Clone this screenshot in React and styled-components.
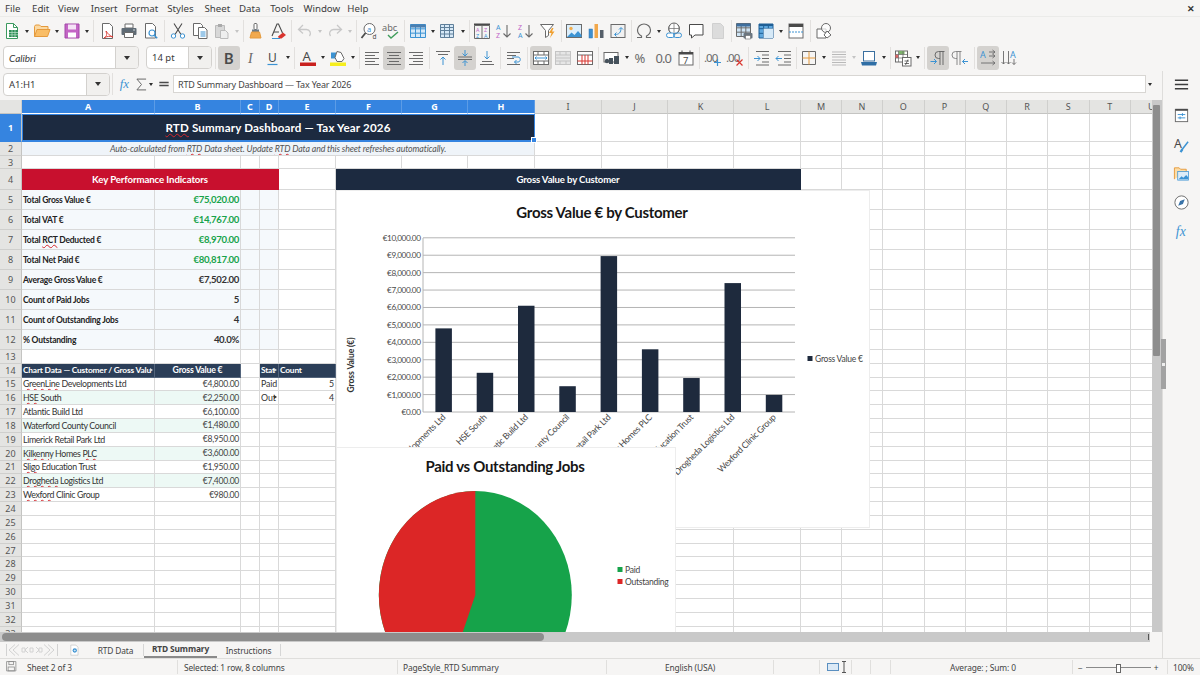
import React from "react";
import styled, { createGlobalStyle, css } from "styled-components";

const UI = `"Noto Sans", "Open Sans", sans-serif`;
const CELL = `Lato, "Liberation Sans", sans-serif`;
const BG = "#f6f5f4";
const GRID = "#d9d9d9";
const NAVY = "#1c2a40";
const HEAD = "#2b3e58";
const BLUE = "#3584e0";

const Global = createGlobalStyle`
  html, body { margin: 0; padding: 0; width: 1200px; height: 675px; overflow: hidden; background: ${BG}; }
  * { box-sizing: border-box; }
`;

const Win = styled.div`
  width: 1200px; height: 675px; display: flex; flex-direction: column; overflow: hidden;
  background: ${BG}; font-family: ${UI}; color: #3d3d3d;
`;
const MenuBar = styled.div`
  height: 17px; flex: none; display: flex; align-items: center; padding: 0 5px 0 5px; font-size: 9.7px;
  border-bottom: 1px solid #ebebe9;
`;
const MenuItem = styled.span` margin-right: ${p => p.$gap}px; `;
const Close = styled.span` margin-left: auto; font-size: 9px; font-weight: 700; color: #333; line-height: 1; `;
const Toolbar = styled.div`
  height: ${p => p.$h}px; flex: none; display: flex; align-items: center; padding-left: ${p => p.$pad || 0}px;
  padding-top: ${p => p.$top || 0}px;
`;
const ToolBtn = styled.div`
  width: ${p => p.$w || 22}px; height: 24px; flex: none; display: flex; align-items: center; justify-content: center;
  border-radius: 3px; background: ${p => (p.$on ? "#d4d2cf" : "transparent")};
  svg { display: block; overflow: visible; }
`;
const Sep = styled.div`
  width: ${p => p.$w}px; flex: none; height: 22px; display: flex; justify-content: center;
  &::before { content: ""; width: 1px; background: #e2e0de; }
`;
const Caret = styled.div`
  width: 8px; height: 24px; flex: none; display: flex; align-items: center; justify-content: center;
  &::before { content: ""; border: 2.5px solid transparent; border-top: 3px solid ${p => (p.$dim ? "#c4c4c4" : "#2e2e2e")}; border-bottom: 0; }
`;
const Combo = styled.div`
  width: ${p => p.$w}px; height: ${p => p.$h || 23}px; margin-left: ${p => p.$ml || 0}px; flex: none; display: flex;
  background: #fff; border: 1px solid #d3d1ce; border-radius: 4px; overflow: hidden;
`;
const ComboText = styled.div`
  flex: 1; display: flex; align-items: center; padding-left: 5px; font-size: ${p => (p.$it ? 10 : 9.5)}px; color: #3a3a3a;
  font-style: ${p => (p.$it ? "italic" : "normal")}; font-family: ${p => (p.$it ? CELL : UI)};
`;
const ComboArrow = styled.div`
  width: 23px; flex: none; background: #f1f0ee; border-left: 1px solid #d3d1ce; display: flex; align-items: center; justify-content: center;
  &::before { content: ""; border: 3.5px solid transparent; border-top: 4px solid #333; border-bottom: 0; }
`;
const Body = styled.div` flex: 1; display: flex; min-height: 0; `;
const Left = styled.div` width: 1162px; flex: none; display: flex; flex-direction: column; `;
const FormulaBar = styled.div` height: 29px; flex: none; display: flex; align-items: center; padding-bottom: 3px; `;
const Input = styled.div`
  width: 973px; height: 18px; flex: none; background: #fff; border: 1px solid #d8d6d3; padding-left: 4px;
  display: flex; align-items: center; font-size: 9px; letter-spacing: -.2px; color: #444; white-space: nowrap;
`;
const SheetRow = styled.div` height: 532px; flex: none; display: flex; `;
const Sheet = styled.div`
  width: 1152px; height: 532px; flex: none; position: relative; overflow: hidden; background: #fff;
`;
const Grid = styled.div`
  display: grid; grid-template-columns: ${p => p.$cols}; grid-template-rows: ${p => p.$rows};
  font-family: ${CELL};
`;
const ColHead = styled.div`
  display: flex; align-items: center; justify-content: center; font-size: 9px; overflow: hidden;
  background: ${p => (p.$sel ? BLUE : "#e4e4e2")}; color: ${p => (p.$sel ? "#fff" : "#555")};
  font-weight: ${p => (p.$sel ? 700 : 400)}; border-right: 1px solid ${p => (p.$sel ? "#5c9ce6" : "#cfcfcd")};
  border-bottom: 1px solid ${p => (p.$sel ? "#fff" : "#c4c4c2")};
  font-family: ${UI};
`;
const RowHead = styled(ColHead)`
  font-size: 9px; border-right: 1px solid #c4c4c2; border-bottom: 1px solid ${p => (p.$sel ? BLUE : "#cfcfcd")};
`;
const kinds = {
  blank: css``,
  title: css`background: ${NAVY}; color: #fff; font-weight: 700; font-size: 11.6px; justify-content: center; letter-spacing: .15px; border-color: ${NAVY};`,
  note: css`background: #eff4f9; color: #555; font-style: italic; font-size: 8.8px; justify-content: center; letter-spacing: -.13px;`,
  kpihead: css`background: #c8102e; color: #fff; font-weight: 700; font-size: 9.7px; justify-content: center; letter-spacing: -.12px; border-color: #c8102e;`,
  bandhead: css`background: ${NAVY}; color: #fff; font-weight: 700; font-size: 9.6px; justify-content: center; letter-spacing: -.15px; border-color: ${NAVY};`,
  label: css`background: #f5f9fc; color: #222; font-weight: 700; font-size: 8.5px; padding-left: 1px; letter-spacing: -.22px;`,
  tint: css`background: #f5f9fc;`,
  good: css`background: #f5f9fc; color: #16a34a; font-weight: 700; font-size: 9.6px; justify-content: flex-end; padding-right: 1px; letter-spacing: -.35px;`,
  num: css`background: #f5f9fc; color: #333; font-weight: 700; font-size: 9.6px; justify-content: flex-end; padding-right: 1px; letter-spacing: -.35px;`,
  head: css`background: ${HEAD}; color: #fff; font-weight: 700; font-size: 8.4px; padding-left: 1px; letter-spacing: -.2px; border-color: #53647b;`,
  headc: css`background: ${HEAD}; color: #fff; font-weight: 700; font-size: 8.7px; justify-content: center; align-items: flex-start; letter-spacing: -.2px; border-color: #53647b;`,
  name: css`background: ${p => (p.$alt ? "#edf9f5" : "#fff")}; color: #333; font-size: 8.8px; line-height: 10px; padding: 0 0 1px 1px; align-items: flex-end; letter-spacing: -.35px;`,
  amount: css`background: ${p => (p.$alt ? "#edf9f5" : "#fff")}; color: #444; font-size: 8.6px; justify-content: flex-end; padding-right: 1px; letter-spacing: -.3px;`,
  small: css`color: #333; font-size: 8.8px; padding-left: 1px; letter-spacing: -.1px;`,
  smallr: css`color: #333; font-size: 8.8px; justify-content: flex-end; padding-right: 1px;`,
};
const Cell = styled.div`
  grid-column: span ${p => p.$span || 1}; display: flex; align-items: center; overflow: hidden; white-space: nowrap;
  position: relative; border-right: 1px solid ${GRID}; border-bottom: 1px solid ${GRID};
  ${p => kinds[p.$kind || "blank"]}
`;
const Clip = styled.span`
  position: absolute; right: 1px; top: 4px; border: 2.5px solid transparent; border-left: 3px solid ${p => p.$c || "#ddd"}; border-right: 0;
`;
const Typo = styled.span`
  text-decoration: underline wavy #d6262c; text-decoration-thickness: 1px; text-underline-offset: .5px;
`;
const Selection = styled.div`
  position: absolute; left: 22px; top: 14px; width: 513px; height: 28px; border: 1px solid ${BLUE}; border-bottom-width: 2px; pointer-events: none;
  &::after { content: ""; position: absolute; right: -3px; bottom: -3px; width: 4px; height: 4px; background: ${BLUE}; border: 1px solid #fff; }
`;
const ChartCard = styled.div`
  position: absolute; left: ${p => p.$x}px; top: ${p => p.$y}px; width: ${p => p.$w}px; height: ${p => p.$h}px; background: #fff;
  outline: 1px solid #ededed; outline-offset: -1px; svg { display: block; overflow: hidden; }
`;
const ChartTitle = styled.text`
  font-family: ${CELL}; font-weight: 700; font-size: 15px; fill: #161616; text-anchor: middle; letter-spacing: -.3px;
`;
const AxisLabel = styled.text`
  font-family: ${CELL}; font-size: 8.8px; fill: #4a4a4a; text-anchor: end; letter-spacing: -.28px;
`;
const TickLabel = styled(AxisLabel)` font-size: 8.2px; letter-spacing: -.4px; `;
const LegendLabel = styled.text`
  font-family: ${CELL}; font-size: 8.5px; fill: #444; letter-spacing: -.25px;
`;
const AxisTitle = styled.text`
  font-family: ${CELL}; font-weight: 700; font-size: 8.6px; fill: #333; text-anchor: middle; letter-spacing: -.1px;
`;
const VScroll = styled.div` width: 10px; flex: none; background: #c9c9c9; padding: 5px 1px 0; `;
const VThumb = styled.div` width: 7px; height: 251px; background: #8d8d8d; border-radius: 1px; `;
const HScroll = styled.div`
  height: 10px; width: 1150px; flex: none; background: #c9c9c9; display: flex; align-items: center; padding-left: 2px; position: relative;
  &::after { content: ""; position: absolute; right: 1px; top: 2px; width: 1px; height: 6px; background: #555; }
`;
const HThumb = styled.div` width: 542px; height: 8px; background: #8d8d8d; border-radius: 4px; `;
const TabBar = styled.div` height: 16px; flex: none; display: flex; align-items: stretch; font-size: 8.4px; letter-spacing: -.12px; `;
const NavBox = styled.div` width: 62px; flex: none; display: flex; align-items: center; padding-left: 5px; `;
const AddTab = styled.div` width: 26px; flex: none; display: flex; align-items: center; padding-left: 7px; `;
const Tab = styled.div`
  width: ${p => p.$w}px; flex: none; display: flex; align-items: center; justify-content: center; color: #444; padding-bottom: 1px;
  font-weight: ${p => (p.$on ? 700 : 400)}; border-bottom: 2px solid ${p => (p.$on ? "#8a8a8a" : "transparent")};
  border-right: ${p => (p.$sep ? "1px solid #d6d6d6" : "none")};
  ${p => p.$sep && "height: 12px; align-self: center; padding-bottom: 0; border-bottom: none;"}
`;
const Side = styled.div`
  width: 38px; flex: none; border-left: 1px solid #dedddb; display: flex; flex-direction: column; align-items: center; position: relative;
`;
const SideBtn = styled.div`
  height: ${p => p.$h || 29}px; width: 100%; flex: none; display: flex; align-items: center; justify-content: center;
  margin-bottom: ${p => p.$mb || 0}px; svg { overflow: visible; }
`;
const Grip = styled.div`
  position: absolute; left: -2px; top: 268px; width: 5px; height: 50px; background: #a2a2a2;
  &::after { content: ""; position: absolute; left: 1px; top: 24px; width: 3px; height: 3px; background: #eee; }
`;
const Status = styled.div`
  height: 17px; flex: none; display: flex; border-top: 1px solid #dfdedc; font-size: 8.4px; letter-spacing: -.12px; color: #444;
`;
const StatusCell = styled.div`
  width: ${p => p.$w}px; flex: none; display: flex; align-items: center; justify-content: ${p => p.$j || "flex-start"};
  padding-left: ${p => p.$pl || 0}px; gap: ${p => p.$gap || 0}px;
  border-left: ${p => (p.$first ? "none" : "1px solid #e0dfdd")}; margin: 1px 0; white-space: nowrap;
`;
const Slider = styled.div`
  width: 65px; height: 1px; background: #8a8a8a; position: relative;
  &::after { content: ""; position: absolute; left: 30px; top: -3px; width: 3px; height: 7px; background: #fff; border: 1px solid #666; }
`;

const G = "#6a6a6a", D = "#4a4a4a", B = "#3c93d3", O = "#e59a3c", R = "#d9352f", L = "#c8c8c8";
const ln = { fill: "none", stroke: G, strokeWidth: 1 };
const bl = { fill: "none", stroke: B, strokeWidth: 1 };

const grid = (c, x = 1.5, y = 2.5, w = 15, h = 13) => (
  <path d={`M${x} ${y}h${w}v${h}h-${w}zM${x} ${y + h / 3}h${w}M${x} ${y + 2 * h / 3}h${w}M${x + w / 3} ${y}v${h}M${x + 2 * w / 3} ${y}v${h}`} fill="none" stroke={c} />
);

const icons = {
  new: <><path d="M3.5 1.5h7l4 4v11h-11z" fill="#fff" stroke="#3c9a5f" /><path d="M10.5 1.5v4h4" fill="none" stroke="#3c9a5f" /><rect x="6" y="8" width="9" height="7" fill="#2f8f57" /><path d="M6 10.5h9M6 12.8h9M9 8v7M12 8v7" stroke="#bfe3cd" strokeWidth=".7" /></>,
  open: <><path d="M1.5 14.5v-10l1-1.5h4l1.5 1.5h7v3" fill="#fbd9a2" stroke={O} /><path d="M1.5 14.5l2.5-7h13l-2.5 7z" fill="#f9bd66" stroke={O} /></>,
  save: <><path d="M2 2h14v14H2z" fill="#c365c5" stroke="#a348a8" /><rect x="5" y="2.5" width="8" height="5" fill="#f5e3f6" /><rect x="5" y="10.5" width="8" height="5" fill="#fff" /></>,
  pdf: <><path d="M4.5 1.5h7l3 3v12h-10z" fill="#fff" stroke={G} /><path d="M8 9c1 4 1 5-2 7 3-2 6-2 9-1-3-1-5-3-7-6z" fill="none" stroke={R} strokeWidth=".9" /></>,
  print: <><path d="M5 2h8v4H5z" fill="#fff" stroke={G} /><rect x="1.5" y="6" width="15" height="7" rx="1" fill="#5f6b75" /><path d="M4.5 10.5h9v5h-9z" fill="#fff" stroke={G} /><circle cx="14" cy="8" r=".7" fill="#fff" /></>,
  preview: <><path d="M3.5 1.5h7l3 3v11.5h-10z" fill="#fff" stroke={G} /><circle cx="10" cy="11" r="3" fill="#fff" stroke={B} strokeWidth="1.2" /><path d="M12.2 13.2l3 3" stroke={B} strokeWidth="1.5" /></>,
  cut: <><path d="M5 1.5l7 11M13 1.5l-7 11" stroke={D} strokeWidth="1.1" /><circle cx="4.5" cy="14" r="2.2" fill="#fff" stroke={B} /><circle cx="13.5" cy="14" r="2.2" fill="#fff" stroke={B} /></>,
  copy: <><path d="M2.5 1.5h7l2 2v10h-9z" fill="#fff" stroke={G} /><path d="M7.5 5.5h6l2.5 2.5v8.5h-8.5z" fill="#fff" stroke={G} /><path d="M9.5 10h5M9.5 12h5M9.5 14h5" stroke={B} /></>,
  paste: <><path d="M2.5 3.5h9v12h-9z" fill="#d8d8d8" stroke="#bbb" /><rect x="5" y="2" width="4" height="3" fill="#aaa" /><path d="M7.5 8.5h5l2.5 2.5v5.5h-7.5z" fill="#eee" stroke="#bbb" /></>,
  clone: <><rect x="7" y="1.5" width="3" height="6" rx="1" fill="#fff" stroke={G} /><path d="M5 7.5h7v2.5H5z" fill="#6c7a86" /><path d="M4.5 10h8l1.5 6H3z" fill="#f1a94e" stroke={O} /></>,
  clear: <><path d="M3 14L8 2h1.5l4 9" fill="none" stroke={D} strokeWidth="1.1" /><path d="M5 10h5" stroke={D} /><path d="M9 14.5l5-4 3 2.5-4.5 3.5H10z" fill={R} /><path d="M3 16.5h8" stroke={B} /></>,
  undo: <path d="M7 3L2.5 7.5 7 11.5M2.5 7.5h8a4 4 0 0 1 3 6.5" fill="none" stroke={L} strokeWidth="1.3" />,
  redo: <path d="M11 3l4.5 4.5L11 11.5M15.5 7.5h-8a4 4 0 0 0-3 6.5" fill="none" stroke={L} strokeWidth="1.3" />,
  find: <><circle cx="9.5" cy="7" r="5.5" fill="#fff" stroke={G} /><path d="M5.5 11l-4 5" stroke={D} strokeWidth="1.8" /><text x="7" y="9.5" fontSize="7.5" fill={B} fontFamily={UI}>a</text><text x="12.5" y="17" fontSize="6.5" fill={D} fontFamily={UI}>d</text></>,
  spell: <><text x="0" y="9" fontSize="9.2" fill={G} fontFamily={UI}>abc</text><path d="M6 13l3 3 7-6" fill="none" stroke="#3f9d5b" strokeWidth="1.4" /></>,
  table: <><rect x="1.5" y="2.5" width="15" height="13" fill="#d7e9f7" />{grid(B)}<rect x="1.5" y="2.5" width="15" height="3" fill="#4b7fb0" /></>,
  rows: <><rect x="1.5" y="2.5" width="13" height="13" fill="#d7e9f7" /><path d="M1.5 2.5h13v13h-13zM1.5 5.5h13M1.5 8.5h13M1.5 12h13M5.5 2.5v13M10.5 2.5v13" fill="none" stroke="#5f7f9a" /></>,
  sort: <><rect x="1" y="1.5" width="16" height="2" fill={D} /><path d="M1.5 3.5h15v13h-15zM9 3.5v13" fill="#f4f4f4" stroke={G} /><text x="3" y="9.5" fontSize="5.4" fill="#c065c8" fontFamily={UI}>A</text><text x="3" y="15.5" fontSize="5.4" fill={B} fontFamily={UI}>Z</text><text x="11" y="9.5" fontSize="5.4" fill="#c065c8" fontFamily={UI}>Z</text><text x="11" y="15.5" fontSize="5.4" fill={B} fontFamily={UI}>A</text></>,
  asc: <><text x="1" y="7.5" fontSize="7" fill={B} fontFamily={UI}>A</text><text x="1" y="16" fontSize="7" fill="#c065c8" fontFamily={UI}>Z</text><path d="M12 3v12M8.5 11.5l3.5 3.5 3.5-3.500" fill="none" stroke={G} strokeWidth="1.1" /></>,
  desc: <><text x="1" y="7.5" fontSize="7" fill="#c065c8" fontFamily={UI}>Z</text><text x="1" y="16" fontSize="7" fill={B} fontFamily={UI}>A</text><path d="M12 3v12M8.5 11.5l3.5 3.5 3.5-3.500" fill="none" stroke={G} strokeWidth="1.1" /></>,
  filter: <><path d="M1.5 2.5h13l-5 6v5l-3 2v-7z" fill="#fff" stroke={G} /><path d="M13 6l-3 5h2.5l-1.5 5 4.5-6.5h-2.5l1.5-3.5z" fill="#f0a030" /></>,
  image: <><rect x="1.5" y="2.5" width="15" height="13" fill="#dceefb" stroke={G} /><circle cx="6" cy="6.5" r="1.7" fill="#f1ad4e" /><path d="M2 15l4.500-4.500 3 2.500 3.500-4 3.500 4v2z" fill={B} /></>,
  chart: <><rect x="2" y="7" width="3.5" height="9" fill="#3f8fcf" stroke="#2c76b0" strokeWidth=".5" /><rect x="7.5" y="2" width="3.5" height="14" fill="#f2a84b" /><rect x="13" y="8" width="3.5" height="8" fill="#555f69" /></>,
  pivot: <><rect x="2" y="2.5" width="14" height="13" fill="#f1f1f1" stroke={G} /><path d="M6 12.5c4 0 6-2 6-6.5M10 7.5l2-2 2 2M7.5 10.5l-2 2 2 2" fill="none" stroke={B} /></>,
  omega: <path d="M2 15.5h4.500v-1.500C3.500 12.500 2.500 10 2.500 8c0-3.500 3-6 6.500-6s6.500 2.500 6.500 6c0 2-1 4.500-4 6v1.500H16" fill="none" stroke={G} strokeWidth="1.2" />,
  link: <><circle cx="9" cy="6.500" r="5.500" fill="#fff" stroke={G} /><path d="M3.500 6.500h11M9 1v11M5.500 2.500c-2 3-2 5 0 8M12.500 2.500c2 3 2 5 0 8" fill="none" stroke={G} strokeWidth=".7" /><rect x="1.500" y="11" width="8" height="4.500" rx="2.200" fill="#fff" stroke={B} /><rect x="8.500" y="11" width="8" height="4.500" rx="2.200" fill="none" stroke={B} /></>,
  comment: <path d="M2.500 2.500h13.500v10.500H8l-3.500 3v-3h-2z" fill="#fff" stroke={D} />,
  hf: <path d="M3.500 1.500h8l3 3v12h-11z" fill="#dcdcdc" stroke="#d0d0d0" />,
  printarea: <><rect x="1.500" y="1.500" width="14" height="13" fill="#cfe4f4" />{grid(G, 1.500, 1.500, 14, 13)}<rect x="1.500" y="1.500" width="14" height="3" fill="#3f6f9e" /><rect x="8.500" y="11" width="9" height="5.500" rx="1" fill="#6b7680" /><rect x="10.500" y="13.500" width="5" height="3.500" fill="#fff" stroke={G} strokeWidth=".6" /></>,
  freeze: <><rect x="2" y="2" width="14" height="14" fill="#5da6dd" />{grid("#1f5f96", 2, 2, 14, 14)}<rect x="2" y="2" width="14" height="2" fill="#1f5f96" /><rect x="6.600" y="6.600" width="9.400" height="9.400" fill="#d6e9f7" /></>,
  split: <><rect x="2" y="2" width="14" height="14" fill="#fff" stroke={G} /><rect x="2" y="2" width="14" height="3" fill={D} /><path d="M2 10h14" stroke={B} strokeDasharray="2 1" /></>,
  shapes: <><path d="M2 7h9v9H2z" fill="#fff" stroke={G} /><circle cx="11" cy="6" r="4.500" fill="#fff" fillOpacity=".7" stroke={G} /><path d="M12 9l4 4-4 3-3-3z" fill="#fff" stroke={G} /></>,
  bold: <text x="4" y="14.500" fontSize="14.500" fontWeight="700" fill={D} fontFamily={CELL}>B</text>,
  italic: <text x="6" y="14" fontSize="14" fontStyle="italic" fill={G} fontFamily="Liberation Serif">I</text>,
  under: <><text x="4" y="12.500" fontSize="12" fill={D} fontFamily={UI}>U</text><path d="M3.500 15.500h10" stroke={B} strokeWidth="1.200" /></>,
  fontcolor: <><text x="3.500" y="12" fontSize="13" fill={D} fontFamily={UI}>A</text><rect x="1" y="13.500" width="16" height="3.500" fill="#c9211e" /></>,
  fontbg: <><path d="M2 3.500h5v6H2z" fill={B} /><path d="M8 2.500l4 1 3 6-2 3H8l-2-4z" fill="#fff" stroke={G} /><rect x="1" y="13.500" width="16" height="3.500" fill="#f6ee1d" /></>,
  aleft: <path d="M2 3.500h14M2 6.500h10M2 9.500h14M2 12.500h10M2 15.500h14" {...ln} />,
  acenter: <path d="M2 3.500h14M4 6.500h10M2 9.500h14M4 12.500h10M2 15.500h14" {...ln} />,
  aright: <path d="M2 3.500h14M6 6.500h10M2 9.500h14M6 12.500h10M2 15.500h14" {...ln} />,
  vtop: <><path d="M2 2.500h14M4 5.500h10" {...ln} /><path d="M9 16V8M6.500 10.500L9 8l2.500 2.500" {...bl} /></>,
  vmid: <><path d="M2 8h14M2 10.500h14" {...ln} /><path d="M9 1v5.500M6.500 4.500L9 7l2.500-2.500M9 17v-5M6.500 14L9 11.500 11.500 14" {...bl} /></>,
  vbot: <><path d="M4 12.500h10M2 15.500h14" {...ln} /><path d="M9 2v8M6.500 7.500L9 10l2.500-2.500" {...bl} /></>,
  wrap: <><path d="M2 3.500h13M2 6.500h9M2 9.500h7M2 15.500h13" {...ln} /><path d="M7 8h6c3 0 3 5 0 5H9.500M11.500 11l-2 2 2 2" {...bl} /></>,
  merge: <><rect x="1.500" y="2.500" width="15" height="13" fill="#fff" stroke={G} /><path d="M1.500 6h15M1.500 12h15M6 2.500V6M12 2.500V6M6 12v3.500M12 12v3.500" {...ln} /><path d="M3 9h12M4.500 7.500L3 9l1.500 1.500M13.500 7.500L15 9l-1.500 1.500" {...bl} /></>,
  unmerge: <><rect x="1.500" y="2.500" width="15" height="13" fill="#e6e6e6" stroke="#c4c4c4" /><path d="M1.500 6h15M1.500 9h15M1.500 12h15M6 2.500V6M12 2.500V6M6 12v3.500M12 12v3.500" fill="none" stroke="#c4c4c4" /></>,
  split2: <><rect x="1.500" y="2.500" width="15" height="13" fill="#fff" stroke={G} /><path d="M1.500 6h15" {...ln} /><path d="M6 6v9.500M9 6v9.500M12 6v9.500M1.500 12h15" fill="none" stroke={R} /></>,
  currency: <><rect x="1" y="3.500" width="14" height="9.500" fill="#fff" stroke={G} /><rect x="6" y="9" width="4" height="6" fill="#46525c" /><rect x="11" y="7" width="5" height="8" fill="#46525c" /><circle cx="4" cy="12" r="2.200" fill="#46525c" /></>,
  percent: <text x="1.500" y="14" fontSize="13" fill={G} fontFamily={UI}>%</text>,
  zero: <text x="0.500" y="14" fontSize="13" fill={G} fontFamily={UI} letterSpacing="-1">0.0</text>,
  date: <><rect x="2" y="3.500" width="14" height="12.500" fill="#fff" stroke={G} /><rect x="2" y="3" width="14" height="2.500" fill={D} /><path d="M5 1.500v3M13 1.500v3" stroke={D} /><text x="6" y="14.500" fontSize="9.500" fill={D} fontFamily={UI}>7</text></>,
  adddec: <><text x="0" y="13" fontSize="11.500" fill={G} fontFamily={UI} letterSpacing="-1">.00</text><path d="M13.500 10v7M10 13.500h7" stroke={B} strokeWidth="1.200" /></>,
  deldec: <><text x="0" y="13" fontSize="11.500" fill={G} fontFamily={UI} letterSpacing="-1">.00</text><path d="M10.500 10.500l6 6M16.500 10.500l-6 6" stroke={R} strokeWidth="1.200" /></>,
  indent: <><path d="M3 2.500h13M9 6h7M9 9.500h7M9 13h7M3 16h13" {...ln} /><path d="M1 9.500h6M4.500 7L7 9.500 4.500 12" {...bl} /></>,
  outdent: <><path d="M3 2.500h13M9 6h7M9 9.500h7M9 13h7M3 16h13" {...ln} /><path d="M7 9.500H1M3.500 7L1 9.500 3.500 12" {...bl} /></>,
  borders: <><path d="M2.500 2.500h13v13h-13z" fill="none" stroke={G} /><path d="M9 2.500v13M2.500 9h13" stroke={O} /></>,
  bstyle: <path d="M2 3h14M2 5.500h14M2 8h14M2 11h14M2 13.500h14M2 16h14" fill="none" stroke="#b9b9b9" strokeWidth="1.200" />,
  bcolor: <><rect x="3.500" y="2.500" width="11" height="9.500" fill="#fff" stroke="#3a6f9f" /><path d="M1 13h16l-1 3.500H2z" fill="#2f6ea5" /></>,
  cond: <><rect x="1.500" y="2" width="12" height="11" fill="#fff" stroke={G} /><rect x="4.500" y="2" width="6" height="3.500" fill="#7db26b" /><rect x="1.500" y="5.500" width="3" height="3.500" fill="#d66" /><path d="M1.500 5.500h12M1.500 9h12M4.500 2v11M9 2v11" fill="none" stroke={G} strokeWidth=".7" /><rect x="8.500" y="8.500" width="8.500" height="8.500" fill="#fff" stroke={G} /><path d="M10.500 12h4.500M10.500 14.500h4.500M14 10.500l-2.500 5.500" stroke={D} strokeWidth=".8" /></>,
  ltr: <><path d="M15.500 2.500H9.500a3 3 0 0 0 0 7h1.500M11 2.500V16M14 2.500V16" fill="none" stroke={G} /><path d="M1.500 12.500h6M5 10l2.500 2.500L5 15" {...bl} /></>,
  rtl: <><path d="M10.500 2.500H4.500a3 3 0 0 0 0 7h1.500M6 2.500V16M9 2.500V16" fill="none" stroke="#888" /><path d="M17 12.500h-5.500M14 10l-2.500 2.500L14 15" {...bl} /></>,
  tltr: <><text x="1" y="9" fontSize="9" fill={B} fontFamily={UI}>A</text><path d="M10 3h6M10 7h6M13.500 1l2.500 2-2.500 2M13.500 5l2.500 2-2.500 2M2 14h14M13.500 12l2.500 2-2.500 2" fill="none" stroke={G} strokeWidth=".9" /></>,
  tvert: <><text x="9" y="9" fontSize="9" fill={B} fontFamily={UI}>A</text><path d="M2.500 2v13M7.500 2v13M.5 13l2 2 2-2M5.500 13l2 2 2-2M13 10v5.500M11 13.500l2 2 2-2" fill="none" stroke={G} strokeWidth=".9" /></>,
  fxblue: <text x="3" y="14" fontSize="14.500" fontStyle="italic" fill={B} fontFamily="Liberation Serif">fx</text>,
  sum: <path d="M14.500 2.500h-11L9 9l-5.500 6.500h11" fill="none" stroke={G} strokeWidth="1.200" />,
  equal: <path d="M3 7h12M3 11h12" stroke={D} strokeWidth="1.800" />,
  burger: <path d="M2 4.500h14M2 9h14M2 13.500h14" stroke="#3c3c3c" strokeWidth="1.500" />,
  props: <><rect x="2.500" y="2.500" width="13" height="13" fill="#fff" stroke={G} /><rect x="2.500" y="2" width="13" height="2" fill={D} /><path d="M5 8h8M5 11.500h8M10 6.500v3M7.500 10v3" stroke={B} /></>,
  styles: <><text x="1" y="13" fontSize="13" fill={D} fontFamily={UI}>A</text><path d="M9 15l7-9" stroke={B} strokeWidth="1.600" /><path d="M8 17l2-3" stroke={B} strokeWidth="2.400" /></>,
  gallery: <><path d="M1.500 15V3h5l1.500 1.500h6V7" fill="#fcdca6" stroke={O} /><rect x="5" y="7" width="11.500" height="9" fill="#dcecf8" stroke={B} strokeWidth=".8" /><path d="M6 15l3-3 2 1.500 3-3 2 2.500V15z" fill={B} /></>,
  nav: <><circle cx="9" cy="9" r="7" fill="#fff" stroke={G} /><path d="M12.500 5.500l-2 5-5 2 2-5z" fill="#3a73a8" /></>,
  status: <><path d="M2 2h12v12H2z" fill="none" stroke="#8a8a8a" /><rect x="5" y="2" width="6" height="4" fill="none" stroke="#8a8a8a" /><rect x="4" y="9" width="8" height="5" fill="none" stroke="#8a8a8a" /></>,
  addtab: <><path d="M2.500 1.500h7l3 3v11h-10z" fill="#fff" stroke="#c4c4c4" /><circle cx="8" cy="9" r="3" fill={B} /><path d="M6.500 9h3M8 7.500v3" stroke="#fff" strokeWidth=".8" /></>,
};

const Icon = ({ n, size = 18 }) => <svg width={size} height={size} viewBox="0 0 18 18">{icons[n]}</svg>;

const Strip = ({ items }) =>
  items.map((it, i) => {
    if (it === "|") return <Sep key={i} $w={5} />;
    if (it === "|3") return <Sep key={i} $w={3} />;
    if (it === "|4") return <Sep key={i} $w={4} />;
    if (it === "|6") return <Sep key={i} $w={6} />;
    if (it === "v") return <Caret key={i} />;
    if (it === "w") return <Caret key={i} $dim />;
    const on = it.startsWith("*");
    return <ToolBtn key={i} $on={on}><Icon n={on ? it.slice(1) : it} /></ToolBtn>;
  });

const T1 = ["new","v","open","v","save","v","|","pdf","print","preview","|","cut","copy","paste","w","|4","clone","clear","|","undo","w","redo","w","|4","find","spell","|","table","v","rows","v","|4","sort","asc","desc","filter","|4","image","chart","pivot","|4","omega","v","link","comment","hf","|4","printarea","freeze","v","split","|6","shapes"];
const T2 = ["*bold","italic","under","v","|","fontcolor","v","fontbg","v","|4","aleft","*acenter","aright","|","vtop","*vmid","vbot","|","wrap","|","*merge","unmerge","split2","|","currency","v","percent","zero","date","|","adddec","deldec","|","indent","outdent","|3","borders","v","bstyle","w","bcolor","v","|4","cond","v","|","*ltr","rtl","|6","*tltr","tvert"];

const MENU = [["File",11.5],["Edit",8.6],["View",11.6],["Insert",7.8],["Format",9],["Styles",10.8],["Sheet",8.8],["Data",9.7],["Tools",9.7],["Window",7.2],["Help",0]];

const WIDTHS = [133,86,19,19,57,66,66,67,67,66,66,67,41,41,41.5,41,41.5,41,41.5,41.5,41.5];
const LETTERS = "ABCDEFGHIJKLMNOPQRSTU".split("");
const HEIGHTS = [28,14,13,21,20,20,20,20,20,20,20,20,13.5,14,...Array(19).fill(13.85)];

const kpis = [
  ["Total Gross Value €","€75,020.00","good"],
  ["Total VAT €","€14,767.00","good"],
  [<>Total <Typo>RCT</Typo> Deducted €</>,"€8,970.00","good"],
  ["Total Net Paid €","€80,817.00","good"],
  ["Average Gross Value €","€7,502.00","num"],
  ["Count of Paid Jobs","5","num"],
  ["Count of Outstanding Jobs","4","num"],
  ["% Outstanding","40.0%","num"],
];
const customers = [
  [<><Typo>GreenLine</Typo> Developments Ltd</>,"€4,800.00"],
  [<><Typo>HSE</Typo> South</>,"€2,250.00"],
  ["Atlantic Build Ltd","€6,100.00"],
  ["Waterford County Council","€1,480.00"],
  ["Limerick Retail Park Ltd","€8,950.00"],
  [<><Typo>Kilkenny</Typo> Homes <Typo>PLC</Typo></>,"€3,600.00"],
  [<><Typo>Sligo</Typo> Education Trust</>,"€1,950.00"],
  [<><Typo>Drogheda</Typo> Logistics Ltd</>,"€7,400.00"],
  [<><Typo>Wexford</Typo> Clinic Group</>,"€980.00"],
];

// Cells of one sheet row, in column order; whatever is not listed stays a blank grid cell.
const rowCells = r => {
  if (r === 1) return [{ span: 8, kind: "title", text: <><Typo>RTD</Typo> Summary Dashboard — Tax Year 2026</> }];
  if (r === 2) return [{ span: 8, kind: "note", text: <>Auto-calculated from <Typo>RTD</Typo> Data sheet. Update <Typo>RTD</Typo> Data and this sheet refreshes automatically.</> }];
  if (r === 4) return [{ span: 4, kind: "kpihead", text: "Key Performance Indicators" }, {}, { span: 7, kind: "bandhead", text: "Gross Value by Customer" }];
  if (r >= 5 && r <= 12) {
    const k = kpis[r - 5];
    return [{ kind: "label", text: k[0] }, { kind: k[2], text: k[1] }, { kind: "tint" }, { kind: "tint" }];
  }
  if (r === 14) return [
    { kind: "head", text: "Chart Data — Customer / Gross Valu", clip: true },
    { kind: "headc", text: "Gross Value €" }, {},
    { kind: "head", text: "Stat", clip: true }, { kind: "head", text: "Count" },
  ];
  if (r >= 15 && r <= 23) {
    const c = customers[r - 15];
    const alt = r % 2 === 0;
    const base = [{ kind: "name", alt, text: c[0] }, { kind: "amount", alt, text: c[1] }, {}];
    if (r === 15) return [...base, { kind: "small", text: "Paid" }, { kind: "smallr", text: "5" }];
    if (r === 16) return [...base, { kind: "small", text: "Out", clip: true, clipColor: "#333" }, { kind: "smallr", text: "4" }];
    return base;
  }
  return [];
};

const SheetGrid = () => {
  const rows = [];
  HEIGHTS.forEach((_, idx) => {
    const r = idx + 1;
    rows.push(<RowHead key={`h${r}`} $sel={r === 1}>{r}</RowHead>);
    const cells = rowCells(r);
    const used = cells.reduce((s, c) => s + (c.span || 1), 0);
    cells.forEach((c, i) => (
      rows.push(
        <Cell key={`${r}-${i}`} $span={c.span} $kind={c.kind} $alt={c.alt}>
          {c.text && <span>{c.text}</span>}{c.clip && <Clip $c={c.clipColor} />}
        </Cell>
      )
    ));
    for (let i = used; i < WIDTHS.length; i++) rows.push(<Cell key={`${r}-e${i}`} />);
  });
  return (
    <Grid $cols={["22px", ...WIDTHS.map(w => `${w}px`)].join(" ")} $rows={["14px", ...HEIGHTS.map(h => `${h}px`)].join(" ")}>
      <ColHead />
      {LETTERS.map((l, i) => <ColHead key={l} $sel={i < 8}>{l}</ColHead>)}
      {rows}
    </Grid>
  );
};

const BARS = [4800,2250,6100,1480,8950,3600,1950,7400,980];
const CATS = ["GreenLine Developments Ltd","HSE South","Atlantic Build Ltd","Waterford County Council","Limerick Retail Park Ltd","Kilkenny Homes PLC","Sligo Education Trust","Drogheda Logistics Ltd","Wexford Clinic Group"];
const fmt = n => `€${n.toLocaleString("en-US")}.00`;

const BarChart = () => {
  const ox = 87, y0 = 222, stepY = 17.42, stepX = 41.3;
  return (
    <svg width="534" height="338" viewBox="0 0 534 338">
      <ChartTitle x="266" y="28">Gross Value € by Customer</ChartTitle>
      <AxisTitle transform="translate(17.500 175) rotate(-90)">Gross Value (€)</AxisTitle>
      {Array.from({ length: 11 }, (_, i) => {
        const y = y0 - i * stepY;
        return (
          <g key={i}>
            <path d={`M${ox} ${y}H459`} stroke="#b4b4b4" strokeWidth="1" />
            <TickLabel x="84.500" y={y + 3}>{fmt(i * 1000)}</TickLabel>
          </g>
        );
      })}
      <path d={`M${ox} 48V${y0}`} stroke="#b4b4b4" />
      {BARS.map((v, i) => {
        const h = v / 1000 * stepY;
        return <rect key={i} x={ox + 12.400 + i * stepX} y={y0 - h} width="16.500" height={h} fill="#1e2a3d" />;
      })}
      {CATS.map((c, i) => (
        <AxisLabel key={c} transform={`translate(${ox + 23 + i * stepX} 228) rotate(-45)`}>{c}</AxisLabel>
      ))}
      <rect x="471.500" y="166" width="5" height="5" fill="#1e2a3d" />
      <LegendLabel x="479" y="171.500">Gross Value €</LegendLabel>
    </svg>
  );
};

const PieChart = () => (
  <svg width="340" height="220" viewBox="0 0 340 220">
    <ChartTitle x="169" y="25">Paid vs Outstanding Jobs</ChartTitle>
    <ellipse cx="139.300" cy="148" rx="96.500" ry="104" fill="#16a34a" />
    <path d="M139.300 148V44A96.500 104 0 0 0 106.300 245.700Z" fill="#dc2626" />
    <rect x="281.500" y="120" width="5" height="5" fill="#16a34a" />
    <LegendLabel x="289" y="125.500">Paid</LegendLabel>
    <rect x="281.500" y="132" width="5" height="5" fill="#dc2626" />
    <LegendLabel x="289" y="137.500">Outstanding</LegendLabel>
  </svg>
);

const NavArrows = () => (
  <svg width="54" height="14" viewBox="0 0 54 14" fill="none" stroke="#d2d2d2">
    <path d="M1.500 1v12M10 1.500L4 7l6 5.500M14 1.500L8 7l6 5.500M17 5h3v4h-3zM23 4l-3 3 3 3M25 5h3v4h-3zM31 4l3 3-3 3M34 5h3v4h-3zM39 1.500L45 7l-6 5.500M43 1.500L49 7l-6 5.500M52.500 1v12" />
  </svg>
);

export default function App() {
  return (
    <Win>
      <Global />
      <MenuBar>
        {MENU.map(([m, g]) => <MenuItem key={m} $gap={g}>{m}</MenuItem>)}
        <Close>✕</Close>
      </MenuBar>
      <Toolbar $h={27} $pad={1} $top={1}><Strip items={T1} /></Toolbar>
      <Toolbar $h={27}>
        <Combo $w={136} $ml={3}><ComboText $it>Calibri</ComboText><ComboArrow /></Combo>
        <Combo $w={66} $ml={7}><ComboText>14 pt</ComboText><ComboArrow /></Combo>
        <Sep $w={6} />
        <Strip items={T2} />
      </Toolbar>
      <Body>
        <Left>
          <FormulaBar>
            <Combo $w={107} $ml={3}><ComboText>A1:H1</ComboText><ComboArrow /></Combo>
            <Sep $w={5} />
            <ToolBtn $w={20}><Icon n="fxblue" size={16} /></ToolBtn>
            <ToolBtn $w={12}><Icon n="sum" size={15} /></ToolBtn>
            <Caret />
            <ToolBtn $w={18}><Icon n="equal" size={14} /></ToolBtn>
            <Input>RTD Summary Dashboard — Tax Year 2026</Input>
            <Caret />
          </FormulaBar>
          <SheetRow>
            <Sheet>
              <SheetGrid />
              <Selection />
              <ChartCard $x={336} $y={90} $w={534} $h={338}><BarChart /></ChartCard>
              <ChartCard $x={336} $y={347} $w={340} $h={220}><PieChart /></ChartCard>
            </Sheet>
            <VScroll><VThumb /></VScroll>
          </SheetRow>
          <HScroll><HThumb /></HScroll>
          <TabBar>
            <NavBox><NavArrows /></NavBox>
            <AddTab><Icon n="addtab" size={13} /></AddTab>
            <Tab $w={56} $sep>RTD Data</Tab>
            <Tab $w={73} $on>RTD Summary</Tab>
            <Tab $w={64} $sep>Instructions</Tab>
          </TabBar>
        </Left>
        <Side>
          <Grip />
          <SideBtn $h={26} $mb={4}><Icon n="burger" size={17} /></SideBtn>
          <SideBtn><Icon n="props" size={17} /></SideBtn>
          <SideBtn><Icon n="styles" size={17} /></SideBtn>
          <SideBtn><Icon n="gallery" size={17} /></SideBtn>
          <SideBtn><Icon n="nav" size={17} /></SideBtn>
          <SideBtn><Icon n="fxblue" size={17} /></SideBtn>
        </Side>
      </Body>
      <Status>
        <StatusCell $w={177} $first $pl={5} $gap={8}><Icon n="status" size={14} />Sheet 2 of 3</StatusCell>
        <StatusCell $w={220} $pl={6}>Selected: 1 row, 8 columns</StatusCell>
        <StatusCell $w={209} $pl={5}>PageStyle_RTD Summary</StatusCell>
        <StatusCell $w={167} $j="center">English (USA)</StatusCell>
        <StatusCell $w={46} />
        <StatusCell $w={32} $pl={7} $gap={2}>
          <svg width="22" height="14" viewBox="0 0 22 14"><rect x=".5" y="3.500" width="11" height="7" fill="#dbe9f6" stroke="#5a8fc0" /><path d="M15 1.500h4M17 1.500v11M15 12.500h4" fill="none" stroke="#555" /></svg>
        </StatusCell>
        <StatusCell $w={19} />
        <StatusCell $w={20} />
        <StatusCell $w={182} $pl={59}>Average: ; Sum: 0</StatusCell>
        <StatusCell $w={95} $pl={5} $gap={3}>
          <span>−</span><Slider /><span>+</span>
        </StatusCell>
        <StatusCell $w={33} $pl={5}>100%</StatusCell>
      </Status>
    </Win>
  );
}
